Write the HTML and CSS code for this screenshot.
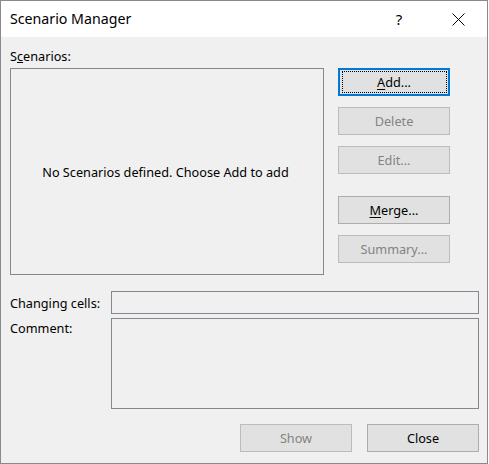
FILE: index.html
```html
<!DOCTYPE html>
<html>
<head>
<meta charset="utf-8">
<link rel="stylesheet" href="styles.css">
</head>
<body>
<div class="window">
  <div class="titlebar">
    <div class="title">Scenario Manager</div>
    <div class="help">?</div>
    <div class="close-x">
      <svg width="13" height="13" viewBox="0 0 13 13"><path d="M0.5 0.5 L12.5 12.5 M12.5 0.5 L0.5 12.5" stroke="#000" stroke-width="1" fill="none"/></svg>
    </div>
  </div>
  <div class="content">
    <div class="top">
      <div class="left">
        <div class="label">S<u>c</u>enarios:</div>
        <div class="listbox">No Scenarios defined. Choose Add to add</div>
      </div>
      <div class="buttons">
        <div class="btn default"><u>A</u>dd...</div>
        <div class="btn disabled">Delete</div>
        <div class="btn disabled">Edit...</div>
        <div class="btn merge"><u>M</u>erge...</div>
        <div class="btn disabled">Summary...</div>
      </div>
    </div>
    <div class="fields">
      <div class="label field-label">Changing cells:</div>
      <div class="input"></div>
      <div class="label comment-label">Comment:</div>
      <div class="textarea"></div>
    </div>
    <div class="footer">
      <div class="btn disabled">Show</div>
      <div class="btn">Close</div>
    </div>
  </div>
</div>
</body>
</html>
```
FILE: styles.css
```css
html, body {
  margin: 0;
  padding: 0;
  background: #ffffff;
}
body {
  font-family: "Noto Sans", "Open Sans", sans-serif;
  font-size: 12.7px;
  color: #000;
}
.window {
  width: 488px;
  height: 464px;
  box-sizing: border-box;
  border: 1px solid #8a8a8a;
  display: flex;
  flex-direction: column;
}
.titlebar {
  height: 36px;
  background: #fff;
  display: flex;
  align-items: center;
  padding-left: 9px;
}
.title {
  font-size: 14.2px;
  flex: 1;
  line-height: 20px;
  padding-bottom: 1px;
}
.help {
  font-size: 15px;
  width: 20px;
  text-align: center;
  margin-right: 43px;
  line-height: 20px;
  padding-bottom: 1px;
}
.close-x {
  width: 13px;
  height: 13px;
  margin-right: 22px;
  margin-top: 1px;
}
.close-x svg { display: block; }
.content {
  flex: 1;
  background: #f0f0f0;
  padding: 11px 8px 0 9px;
  display: flex;
  flex-direction: column;
}
.top {
  display: flex;
  gap: 14px;
}
.left {
  display: flex;
  flex-direction: column;
  gap: 4px;
}
.label {
  line-height: 16px;
  height: 16px;
  white-space: nowrap;
}
.listbox {
  width: 314px;
  height: 207px;
  box-sizing: border-box;
  border: 1px solid #828790;
  display: flex;
  align-items: center;
  justify-content: center;
  padding-right: 3px;
}
.buttons {
  display: flex;
  flex-direction: column;
  gap: 11px;
  padding-top: 20px;
}
.btn {
  position: relative;
  width: 112px;
  height: 28px;
  box-sizing: border-box;
  border: 1px solid #adadad;
  background: #e1e1e1;
  display: flex;
  align-items: center;
  justify-content: center;
}
.btn u { text-underline-offset: 2px; }
.btn.disabled {
  color: #838383;
  border-color: #bcbcbc;
}
.btn.default {
  border: 2px solid #0078d7;
}
.btn.default::after {
  content: "";
  position: absolute;
  left: 2px;
  top: 1px;
  right: 1px;
  bottom: 1px;
  border: 1px dotted #000;
}
.btn.merge {
  margin-top: 11px;
}
.fields {
  margin-top: 16px;
  display: grid;
  grid-template-columns: 101px 368px;
  row-gap: 4px;
}
.field-label {
  align-self: center;
  padding-top: 1px;
}
.comment-label {
  padding-top: 2px;
}
.input {
  height: 23px;
  box-sizing: border-box;
  border: 1px solid #828790;
}
.textarea {
  height: 91px;
  box-sizing: border-box;
  border: 1px solid #828790;
}
.footer {
  margin-top: 15px;
  display: flex;
  justify-content: flex-end;
  gap: 15px;
}
```
